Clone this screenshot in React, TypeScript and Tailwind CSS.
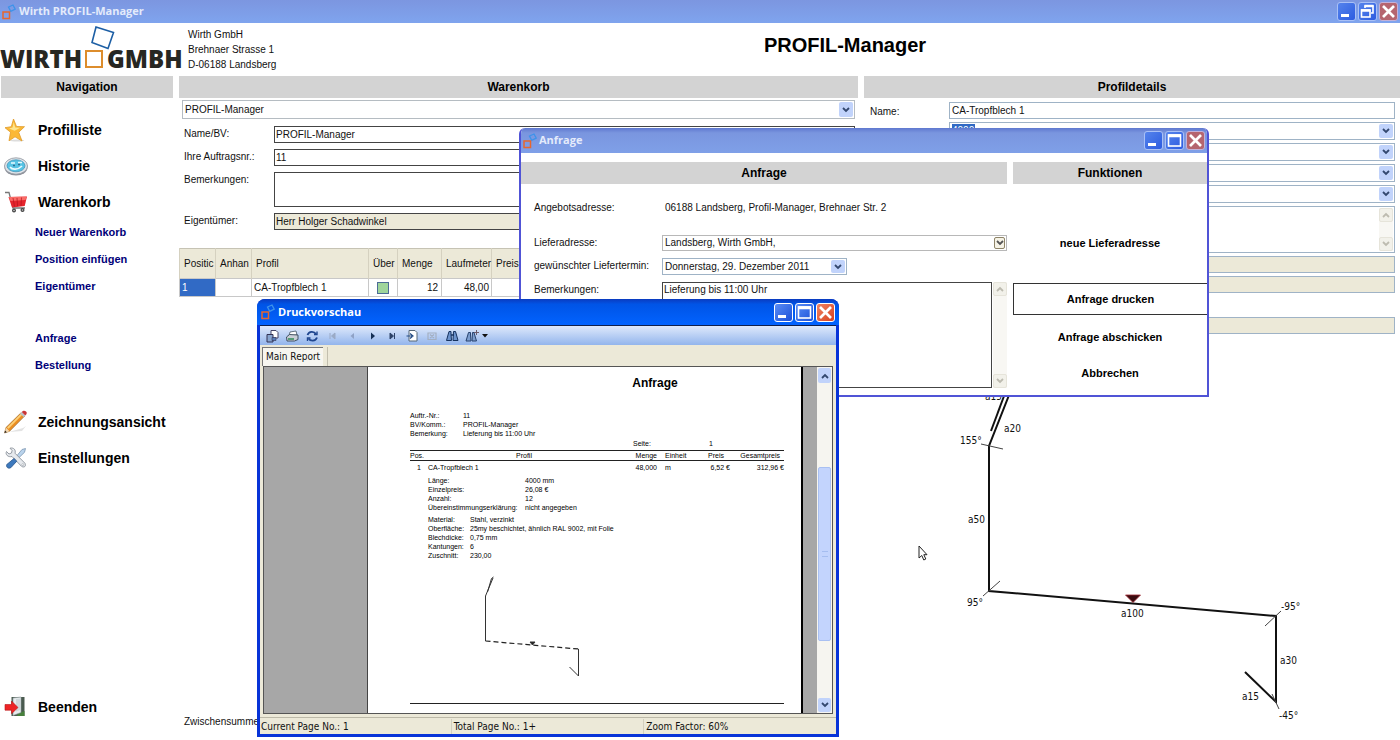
import type { ReactNode } from 'react';
import clsx from 'clsx';

const HEAD_FONT = "font-['Liberation_Sans',Arial,sans-serif]";
const TAHOMA = "font-['DejaVu_Sans_Condensed','DejaVu_Sans',sans-serif]";

function AppIcon() {
  return (
    <svg viewBox="0 0 14 16" className="h-4 w-3.5 shrink-0" fill="none" aria-hidden="true">
      <path d="m6.500 3 4.500-2 2.200 4.200-4.500 2.200z" stroke="#3d93ea" strokeWidth="1.300" />
      <rect x="1" y="8" width="6.500" height="6.500" stroke="#e8662c" strokeWidth="1.500" />
    </svg>
  );
}

function WindowButtons({ active = false, restore = false }: { active?: boolean; restore?: boolean }) {
  const base = 'flex size-[19px] items-center justify-center rounded-[3px] border';
  const blue = active
    ? 'border-white bg-linear-to-br from-[#5a8cf5] to-[#1c4fd8]'
    : 'border-[#a9c0f6] bg-linear-to-br from-[#5583ec] to-[#2d5be0]';
  const red = active
    ? 'border-white bg-linear-to-br from-[#ee8262] to-[#d8401a]'
    : 'border-[#c3b1d8] bg-[#b5656f]';

  return (
    <div className="ml-auto flex gap-0.5">
      <button type="button" aria-label="Minimieren" className={clsx(base, blue)}>
        <svg viewBox="0 0 17 17" className="size-[17px]">
          <path d="M3 12.500h8" stroke="#fff" strokeWidth="3" />
        </svg>
      </button>
      <button type="button" aria-label="Maximieren" className={clsx(base, blue)}>
        <svg viewBox="0 0 17 17" className="size-[17px]" fill="none" stroke="#fff">
          {restore ? (
            <>
              <path d="M6 5V3h8v7h-2" strokeWidth="1.600" />
              <path d="M5.500 3h9" strokeWidth="2.500" />
              <rect x="2.500" y="7" width="8.500" height="7" strokeWidth="1.600" />
              <path d="M2 7.500h9.500" strokeWidth="2.500" />
            </>
          ) : (
            <>
              <rect x="2.500" y="3" width="12" height="11" strokeWidth="1.600" />
              <path d="M2 3.800h13" strokeWidth="3" />
            </>
          )}
        </svg>
      </button>
      <button type="button" aria-label="Schließen" className={clsx(base, red)}>
        <svg viewBox="0 0 17 17" className="size-[17px]">
          <path d="m3 3 11 11M14 3 3 14" stroke="#fff" strokeWidth="2.700" />
        </svg>
      </button>
    </div>
  );
}

function Chevron({ up = false, color = '#33486f' }: { up?: boolean; color?: string }) {
  return (
    <svg viewBox="0 0 8 6" className="h-1.5 w-2" fill="none" stroke={color} strokeWidth="1.8">
      <path d={up ? 'm1 5 3-3 3 3' : 'm1 1 3 3 3-3'} />
    </svg>
  );
}

function SectionBar({ children }: { children: ReactNode }) {
  return (
    <h2 className="flex h-[22px] items-center justify-center bg-[#d3d3d3] text-xs font-bold text-black">
      {children}
    </h2>
  );
}

type ComboProps = {
  id: string;
  value: string;
  label?: string;
  selected?: boolean;
  plain?: boolean;
  className?: string;
};

function Combo({ id, value, label, selected, plain, className }: ComboProps) {
  return (
    <div className={clsx('flex items-center border bg-white p-px', className)}>
      <select
        id={id}
        aria-label={label}
        defaultValue={value}
        className={clsx(
          'h-full min-w-0 appearance-none leading-3',
          selected ? 'ml-px w-[23px] bg-[#316ac5] text-white' : 'w-full bg-white pl-px'
        )}
      >
        <option value={value}>{value}</option>
      </select>
      <span
        className={clsx(
          'pointer-events-none ml-auto flex h-full shrink-0 items-center justify-center rounded-[2px]',
          plain ? 'w-[11px] border border-[#8e8468] bg-[#f6f3e6]' : 'w-3.5 bg-[#c1d3fb]'
        )}
      >
        <Chevron color={plain ? '#555' : '#33486f'} />
      </span>
    </div>
  );
}

function GhostScroll() {
  return (
    <div className="flex w-3.5 shrink-0 flex-col justify-between bg-[#f8f7f3]">
      <span className="flex h-3.5 items-center justify-center rounded-[2px] border border-[#e6e4da] bg-[#f2f1ea]">
        <Chevron up color="#bdbbb0" />
      </span>
      <span className="flex h-3.5 items-center justify-center rounded-[2px] border border-[#e6e4da] bg-[#f2f1ea]">
        <Chevron color="#bdbbb0" />
      </span>
    </div>
  );
}

const icons = {
  star: (
    <>
      <ellipse cx="13" cy="22.500" rx="7" ry="1" fill="#ddd" />
      <path d="m9.500 1 3 7.500 8 .2-5.800 5.600 3.300 8.700-7-4.200-6 4 1.500-8.600L1 9.700l6.300-1z" fill="#fbb836" stroke="#e09a28" strokeWidth=".8" />
      <path d="m9.700 4 1.500 5.500 5 .3-5.500 3L5 10.400l3.600-.8z" fill="#fde58e" />
    </>
  ),
  disc: (
    <>
      <ellipse cx="12" cy="13.500" rx="11.500" ry="8" fill="#8f929b" />
      <ellipse cx="12" cy="12" rx="11.500" ry="8.200" fill="#dfe3e8" stroke="#8f959e" strokeWidth=".8" />
      <ellipse cx="12" cy="11.800" rx="9" ry="6" fill="#57c3e4" stroke="#3b8fb5" strokeWidth=".7" />
      <path d="M6 13c2 3 8 3 12-1M7 9h4M14 8.500h4" stroke="#e6fafe" strokeWidth="1.600" fill="none" />
      <path d="M9 11.500h2M14 10.500h2" stroke="#2d6d90" strokeWidth="1.300" />
    </>
  ),
  cart: (
    <>
      <path d="M1 2.500h4l4 15.500h12" stroke="#777" strokeWidth="1.300" fill="none" />
      <path d="m4.500 7 18.500-.5-2.300 9.500L8 17.500z" fill="#e5242c" />
      <path d="m5 7 17.500-.3-1 3.300L6.500 11z" fill="#fa6b66" />
      <path d="m9 8 1.500 8.500M13 8l.6 8.300M17.500 7.500 17 16" stroke="#b3141c" strokeWidth=".7" />
      <circle cx="10" cy="20.500" r="2" fill="#444" />
      <circle cx="18.500" cy="20" r="2" fill="#444" />
      <circle cx="10" cy="20.500" r=".8" fill="#ccc" />
      <circle cx="18.500" cy="20" r=".8" fill="#ccc" />
    </>
  ),
  pencil: (
    <>
      <path d="M5 22 19 18l3-2-4 5z" fill="#e3e3e3" />
      <path d="m.5 23 1.500-5.500L17 2.800l3.600 3.300L5.500 21.300z" fill="#ec8f22" stroke="#8b5a20" strokeWidth=".6" />
      <path d="m3 17.500 14-14 1.300 1.200L4.500 18.800z" fill="#fcd077" />
      <path d="m.5 23 1.500-5.500 3.500 3.800z" fill="#f2d6ae" />
      <path d="m.5 23 .6-2.400 1.700 1.600z" fill="#222" />
      <path d="m16 3.800 1.700-1.700 3.600 3.300-1.700 1.700z" fill="#b9c3c9" />
      <path d="M17.700 2.100c1.600-2 3.200-1.600 4.300-.6s1.200 2.400-.7 3.900z" fill="#c93537" />
    </>
  ),
  tools: (
    <>
      <path d="m18 3.500 3.500-1-1 3.800L12 14.500 10.200 13z" fill="#b9d3ec" stroke="#7b95b1" strokeWidth=".8" />
      <path d="M2.500 5.500 5 8l2.500-1 .6-2.500L6 2.200c4-1 6 2 5 5L21 17.300c1.500 3-1 4.700-3.500 3L8 10.500c-4 1-7-2-5.500-5z" fill="#e6e9ed" stroke="#8b929b" strokeWidth=".9" />
      <path d="m10 12.500 2.800 2.700-6 6.500c-3 1.500-5-1-4-3.200z" fill="#3d79bd" stroke="#2a568c" strokeWidth=".8" />
      <circle cx="18.800" cy="18.600" r="1" fill="#fff" stroke="#8b929b" strokeWidth=".5" />
    </>
  ),
  exit: (
    <>
      <rect x="7.500" y="2" width="13" height="19" fill="#4a5a4f" />
      <path d="M14 18.500 20.500 16v5H13z" fill="#47803c" />
      <path d="m9 3 8-1v15.500L9 20.500z" fill="#e7ecee" stroke="#8c9799" strokeWidth=".6" />
      <path d="m12 4 4-.5V15l-4 1.500z" fill="#cfd7da" />
      <path d="M1 9.500h6.500V6l6.500 6.500-6.500 6.300v-3.600H1z" fill="#ee2426" stroke="#b51518" strokeWidth=".6" />
    </>
  ),
};

function NavItem({ icon, children }: { icon: keyof typeof icons; children: ReactNode }) {
  return (
    <button type="button" className="flex h-9 items-center gap-2.5 pl-1 text-left text-sm font-bold text-black">
      <svg viewBox="0 0 24 24" className="size-6 shrink-0" aria-hidden="true">{icons[icon]}</svg>
      {children}
    </button>
  );
}

function SubItem({ children }: { children: ReactNode }) {
  return (
    <button type="button" className="h-[26px] pl-[35px] text-left text-[11px] font-bold text-[#000078]">
      {children}
    </button>
  );
}

function Navigation() {
  return (
    <nav className="flex flex-col">
      <SectionBar>Navigation</SectionBar>
      <div className="-ml-px flex flex-1 flex-col pt-3.5 pb-[15px]">
        <NavItem icon="star">Profilliste</NavItem>
        <NavItem icon="disc">Historie</NavItem>
        <NavItem icon="cart">Warenkorb</NavItem>
        <div className="-mt-px flex flex-col gap-px">
          <SubItem>Neuer Warenkorb</SubItem>
          <SubItem>Position einfügen</SubItem>
          <SubItem>Eigentümer</SubItem>
        </div>
        <div className="my-[26px] flex flex-col gap-px">
          <SubItem>Anfrage</SubItem>
          <SubItem>Bestellung</SubItem>
        </div>
        <NavItem icon="pencil">Zeichnungsansicht</NavItem>
        <NavItem icon="tools">Einstellungen</NavItem>
        <div className="mt-auto flex flex-col">
          <NavItem icon="exit">Beenden</NavItem>
        </div>
      </div>
    </nav>
  );
}

const cartColumns = [
  { title: 'Positic', width: 'w-9' },
  { title: 'Anhan', width: 'w-9' },
  { title: 'Profil', width: 'w-[117px]' },
  { title: 'Über', width: 'w-[29px]' },
  { title: 'Menge', width: 'w-11' },
  { title: 'Laufmeter', width: 'w-[50px]' },
  { title: 'Preis', width: '' },
];

function Warenkorb() {
  const field = 'h-[17px] w-full border border-[#444] px-px';
  return (
    <section className="flex min-w-0 flex-col">
      <SectionBar>Warenkorb</SectionBar>
      <div className="px-[3px] pt-0.5">
        <Combo id="cart" label="Warenkorb" value="PROFIL-Manager" className="h-[19px] border-[#b5bcc2]" />
      </div>
      <div className="mt-[7px] grid grid-cols-[90px_minmax(0,1fr)] gap-y-1.5 pr-[3px] pl-[5px]">
        <label htmlFor="bv" className="leading-4">Name/BV:</label>
        <input id="bv" defaultValue="PROFIL-Manager" className={field} />
        <label htmlFor="auftrag" className="leading-4">Ihre Auftragsnr.:</label>
        <input id="auftrag" defaultValue="11" className={field} />
        <label htmlFor="bem" className="leading-4">Bemerkungen:</label>
        <textarea id="bem" className="h-[35px] w-full resize-none border border-[#444]" />
        <label htmlFor="owner" className="leading-4">Eigentümer:</label>
        <input id="owner" readOnly defaultValue="Herr Holger Schadwinkel" className={clsx(field, 'bg-[#ece9d8]')} />
      </div>
      <table className="mt-[18px] w-full table-fixed border-collapse border border-[#c6c3b4]">
        <thead>
          <tr className="h-[30px] bg-[#ece9d8]">
            {cartColumns.map((c) => (
              <th
                key={c.title}
                className={clsx(c.width, 'border-x border-x-[#d5d1c0] pl-1 text-left font-normal whitespace-nowrap')}
              >
                {c.title}
              </th>
            ))}
          </tr>
        </thead>
        <tbody>
          <tr className="h-[18px] *:border *:border-[#c8c8c8]">
            <td className="bg-[#316ac5] pl-0.5 text-white">1</td>
            <td />
            <td className="pl-0.5 whitespace-nowrap">CA-Tropfblech 1</td>
            <td>
              <input
                type="checkbox"
                aria-label="Übereinstimmungserklärung"
                className="mx-auto block size-3 appearance-none border border-[#4c6c96] bg-[#9fd59b] p-px"
              />
            </td>
            <td className="pr-[3px] text-right">12</td>
            <td className="pr-0.5 text-right">48,00</td>
            <td />
          </tr>
        </tbody>
      </table>
      <div className="mt-auto pb-2.5 pl-[5px] leading-4">Zwischensumme:</div>
    </section>
  );
}

function ProfileDrawing() {
  return (
    <svg viewBox="864 380 536 350" className="mt-[46px] h-[350px] w-full" fill="none" stroke="#111">
      <g strokeWidth="2">
        <path d="m1015 380-26 66v145l287 25v86l-31-30" />
        <path d="m1010 380-19 51" />
      </g>
      <g strokeWidth="1" stroke="#444">
        <path d="m981 444 22 5M983 596l17-15M1281 611l-16 15M1272 694l7 15" />
      </g>
      <path d="M1125.500 595h15l-7.500 7.500z" fill="#3a0c10" stroke="#a02a32" strokeWidth=".8" />
      <g className={clsx(TAHOMA, 'text-[10px]')} fill="#111" stroke="none">
        <text x="985" y="400">a15</text>
        <text x="1004" y="432">a20</text>
        <text x="960" y="444">155°</text>
        <text x="968" y="523">a50</text>
        <text x="967" y="606">95°</text>
        <text x="1121" y="617">a100</text>
        <text x="1281" y="610">-95°</text>
        <text x="1280" y="664">a30</text>
        <text x="1242" y="700">a15</text>
        <text x="1279" y="719">-45°</text>
      </g>
    </svg>
  );
}

function Profildetails() {
  const border = 'border-[#9fb3c6]';
  const readOnly = clsx('h-[17px] w-full border bg-[#ece9d8]', border);
  return (
    <section className="flex min-w-0 flex-col">
      <SectionBar>Profildetails</SectionBar>
      <div className="grid grid-cols-[79px_minmax(0,1fr)] pt-1 pr-[5px] pl-1.5">
        <label htmlFor="pname" className="pt-0.5 leading-4">Name:</label>
        <div className="flex flex-col gap-[3px]">
          <input id="pname" defaultValue="CA-Tropfblech 1" className={clsx('h-[17px] w-full border px-0.5', border)} />
          <Combo id="len" label="Länge" value="4000" selected className={clsx('h-[18px]', border)} />
          <Combo id="mat" label="Material" value="" className={clsx('h-[18px]', border)} />
          <Combo id="surface" label="Oberfläche" value="" className={clsx('h-[18px]', border)} />
          <Combo id="thick" label="Blechdicke" value="" className={clsx('h-[18px]', border)} />
          <div className={clsx('flex h-[47px] border p-px', border)}>
            <textarea aria-label="Bemerkung" className="min-w-0 flex-1 resize-none" />
            <GhostScroll />
          </div>
          <input aria-label="Kantungen" readOnly className={readOnly} />
          <input aria-label="Zuschnitt" readOnly className={readOnly} />
          <input aria-label="Gesamtpreis" readOnly className={clsx(readOnly, 'mt-[21px]')} />
        </div>
      </div>
      <ProfileDrawing />
    </section>
  );
}

function AnfrageWindow() {
  const action = 'flex w-full items-center justify-center text-[11px] font-bold text-black';
  return (
    <div className="absolute top-[128px] left-[519px] w-[690px] overflow-hidden rounded-t-md border-2 border-t-0 border-[#5054d6] bg-white">
      <div className="-mx-0.5 flex h-[25px] items-center bg-linear-to-b from-[#5f78cf] via-[#7a96df] via-20% to-[#7fa0e8] pr-1 pl-1">
        <AppIcon />
        <span className="pl-0.5 font-['Open_Sans',sans-serif] text-[11px] font-bold text-[#e4ebfb]">Anfrage</span>
        <WindowButtons />
      </div>
      <div className="flex gap-1.5 pt-[9px] pb-1">
        <div className="min-w-0 flex-1">
          <SectionBar>Anfrage</SectionBar>
          <div className="grid grid-cols-[128px_minmax(0,1fr)] pt-4 pl-[13px]">
            <span className="h-[35px] leading-4">Angebotsadresse:</span>
            <span className="pl-[3px] leading-4">06188 Landsberg, Profil-Manager, Brehnaer Str. 2</span>
            <label htmlFor="delivery" className="h-[23px] leading-4">Lieferadresse:</label>
            <Combo id="delivery" value="Landsberg, Wirth GmbH," plain className="h-4 border-[#b8b8b8]" />
            <label htmlFor="date" className="h-6 leading-4 whitespace-nowrap">gewünschter Liefertermin:</label>
            <Combo id="date" value="Donnerstag, 29. Dezember 2011" className="h-[17px] w-[185px] border-[#9fb3c6]" />
            <label htmlFor="note" className="leading-4">Bemerkungen:</label>
            <div className="flex h-[106px] gap-px">
              <textarea
                id="note"
                defaultValue="Lieferung bis 11:00 Uhr"
                className="min-w-0 flex-1 resize-none border border-[#444] px-px leading-[14px]"
              />
              <GhostScroll />
            </div>
          </div>
        </div>
        <div className="w-[194px]">
          <SectionBar>Funktionen</SectionBar>
          <div className="flex flex-col pt-[41px]">
            <button type="button" className={clsx(action, 'h-9')}>neue Lieferadresse</button>
            <button type="button" className={clsx(action, 'mt-[22px] mb-1 h-8 border border-r-0 border-[#333]')}>Anfrage drucken</button>
            <button type="button" className={clsx(action, 'h-9')}>Anfrage abschicken</button>
            <button type="button" className={clsx(action, 'h-9')}>Abbrechen</button>
          </div>
        </div>
      </div>
    </div>
  );
}

const toolbar: { label: string; art: ReactNode }[] = [
  {
    label: 'Exportieren',
    art: (
      <>
        <path d="M6 1.500h5l2 2V9H6z" fill="#fff" stroke="#446" />
        <path d="M2 5.500h6V13H2z" fill="#88a5cf" stroke="#335" />
        <path d="M7 8.500h4v3H7z" fill="#557bb5" stroke="#335" strokeWidth=".6" />
      </>
    ),
  },
  {
    label: 'Drucken',
    art: (
      <>
        <path d="m5 3 6-1 1 4-8 1z" fill="#fff" stroke="#456" strokeWidth=".8" />
        <path d="m1.500 8 3-2.500L13 6v4.500L9.500 12H2z" fill="#c9ced6" stroke="#345" strokeWidth=".9" />
        <path d="M3 10h6" stroke="#2d8a56" strokeWidth="1.300" />
      </>
    ),
  },
  {
    label: 'Aktualisieren',
    art: (
      <g fill="none" stroke="#1f468f" strokeWidth="1.800">
        <path d="M2.500 6C4 2 9 2 11 5M12 8.500c-1.500 4-6.500 4-8.500 1" />
        <path d="M12 2.500v3H9M2.500 12V9h3" strokeWidth="1.400" />
      </g>
    ),
  },
  { label: 'Erste Seite', art: <path d="M5 4v6M10 4v6L6.500 7z" fill="#9aaac6" stroke="#9aaac6" /> },
  { label: 'Vorherige Seite', art: <path d="M9 4v6L5.500 7z" fill="#8fa2c6" /> },
  { label: 'Nächste Seite', art: <path d="M6 3.500v7L10 7z" fill="#152f55" /> },
  { label: 'Letzte Seite', art: <path d="M9.500 4v6M5 4v6l3.500-3z" fill="#2d4268" stroke="#2d4268" /> },
  {
    label: 'Gehe zu Seite',
    art: (
      <>
        <path d="M4 1.500h6l2 2V12H4z" fill="#fff" stroke="#567" />
        <path d="M1.500 7H7M5 4.500 8 7l-3 2.500" fill="none" stroke="#234b84" strokeWidth="1.200" />
      </>
    ),
  },
  {
    label: 'Abbrechen',
    art: <path d="M3 4h8v6.500H3zM5 5.500l4 3.500M9 5.500 5 9" fill="none" stroke="#a3afc2" strokeWidth="1.200" />,
  },
  {
    label: 'Suchen',
    art: (
      <>
        <path d="M4 2.500h2v3l.5 6H1.500L3 6zM8.500 2.500h2L11.500 6 13 11.500H8z" fill="#6c93cc" stroke="#16325f" />
        <path d="M6 6h3" stroke="#16325f" strokeWidth="1.600" />
      </>
    ),
  },
  {
    label: 'Zoom',
    art: (
      <>
        <path d="M3.500 3.500h2v2.500l.5 6H1L2.500 7zM7.500 3.500h1.500L10 7l1.500 5H7z" fill="#7c9dce" stroke="#28436f" />
        <path d="M11.500 1v5M9 3.500h5" stroke="#6b5c6d" />
      </>
    ),
  },
];

function ReportPage() {
  const details = [
    ['Länge:', '4000 mm'],
    ['Einzelpreis:', '26,08 €'],
    ['Anzahl:', '12'],
    ['Übereinstimmungserklärung:', 'nicht angegeben'],
  ];
  const material = [
    ['Material:', 'Stahl, verzinkt'],
    ['Oberfläche:', '25my beschichtet, ähnlich RAL 9002, mit Folie'],
    ['Blechdicke:', '0,75 mm'],
    ['Kantungen:', '6'],
    ['Zuschnitt:', '230,00'],
  ];
  return (
    <div className="min-w-0 flex-1 border-r-2 border-l border-l-[#444] border-r-black bg-white pr-[17px] pl-[42px] text-[7px] leading-[9px] text-black">
      <h3 className="pt-2 pl-[116px] text-center text-xs leading-4 font-bold">Anfrage</h3>
      <dl className="mt-5 grid grid-cols-[53px_1fr]">
        <dt>Auftr.-Nr.:</dt>
        <dd>11</dd>
        <dt>BV/Komm.:</dt>
        <dd>PROFIL-Manager</dd>
        <dt>Bemerkung:</dt>
        <dd>Lieferung bis 11:00 Uhr</dd>
      </dl>
      <div className="flex pt-px pb-0.5 pl-[223px]">
        <span className="w-[76px]">Seite:</span>
        <span>1</span>
      </div>
      <table className="w-full table-fixed border-collapse">
        <thead>
          <tr className="border-y border-[#222] *:font-normal">
            <th className="w-[18px] text-left">Pos.</th>
            <th>Profil</th>
            <th className="w-[37px] text-right">Menge</th>
            <th className="w-[42px] pl-2 text-left">Einheit</th>
            <th className="w-[31px] pr-1.5 text-right">Preis</th>
            <th className="w-[54px] pr-1 text-right">Gesamtpreis</th>
          </tr>
        </thead>
        <tbody>
          <tr className="*:pt-0.5">
            <td className="text-center">1</td>
            <td>CA-Tropfblech 1</td>
            <td className="text-right">48,000</td>
            <td className="pl-2">m</td>
            <td className="text-right">6,52 €</td>
            <td className="text-right">312,96 €</td>
          </tr>
        </tbody>
      </table>
      <dl className="mt-1 grid grid-cols-[97px_1fr] pl-[18px]">
        {details.map(([k, v]) => (
          <div key={k} className="contents">
            <dt className="whitespace-nowrap">{k}</dt>
            <dd>{v}</dd>
          </div>
        ))}
      </dl>
      <dl className="mt-[3px] grid grid-cols-[42px_1fr] pl-[18px]">
        {material.map(([k, v]) => (
          <div key={k} className="contents">
            <dt>{k}</dt>
            <dd>{v}</dd>
          </div>
        ))}
      </dl>
      <svg viewBox="0 0 100 108" className="mt-3.5 ml-[73px] h-[108px] w-[100px]" fill="none" stroke="#333">
        <path d="M10 4 2.500 22v45M4.500 18l4-13.500L10.500 3" />
        <path d="m2.500 67 93 8" strokeDasharray="5 3" stroke="#222" strokeWidth="1.200" />
        <path d="M95.500 75v27l-9-9" />
        <path d="M47 68h5l-2.500 3z" fill="#222" />
      </svg>
      <hr className="mt-[21px] border-[#222]" />
    </div>
  );
}

function DruckvorschauWindow() {
  return (
    <div className="absolute top-[299px] left-[257px] flex h-[438px] w-[582px] flex-col overflow-hidden rounded-t-lg bg-[#0733d8]">
      <div className="flex h-[26px] shrink-0 items-center bg-linear-to-b from-[#0a3bbf] via-[#0054e6] via-20% to-[#0263ff] pr-1 pl-1">
        <AppIcon />
        <span className="pl-[3px] font-['Open_Sans',sans-serif] text-[11px] font-bold text-white">Druckvorschau</span>
        <WindowButtons active />
      </div>
      <div className="mx-[3px] mb-[3px] flex min-h-0 flex-1 flex-col bg-[#ece9d8]">
        <div className="flex h-5 shrink-0 items-center border-t border-[#10204c] bg-linear-to-b from-[#dfe9fb] to-[#93b5ec] pl-0.5">
          {toolbar.map((t) => (
            <button key={t.label} type="button" title={t.label} className="flex w-5 justify-center">
              <svg viewBox="0 0 14 14" className="size-3.5">{t.art}</svg>
            </button>
          ))}
          <svg viewBox="0 0 6 4" className="h-1 w-1.5"><path d="M0 0h6L3 3.500z" fill="#111" /></svg>
        </div>
        <div className="flex h-[21px] shrink-0 items-stretch pt-0.5">
          <button type="button" className={clsx(TAHOMA, 'ml-0.5 border-t border-l border-[#777] bg-[#f7f6f0] px-[3px] pb-0.5 text-[10px]')}>
            Main Report
          </button>
          <span className="ml-1 border-l border-[#c2bfae]" />
        </div>
        <div className="mx-[3px] flex min-h-0 flex-1 border border-[#555] bg-[#a7a7a7]">
          <div className="w-[103px] shrink-0" />
          <ReportPage />
          <div className="w-3.5 shrink-0" />
          <div className="flex w-[15px] shrink-0 flex-col bg-[#f6f5f0] p-px">
            <button type="button" aria-label="Nach oben" className="flex h-[15px] items-center justify-center rounded-[2px] bg-[#c1d3fb]">
              <Chevron up />
            </button>
            <div className="mt-[84px] flex h-[174px] items-center justify-center rounded-[2px] border border-[#a9c0f2] bg-[#c3d4fd]">
              <span className="h-1.5 w-1.5 border-y border-[#a5bdf0]" />
            </div>
            <button type="button" aria-label="Nach unten" className="mt-auto flex h-3.5 items-center justify-center rounded-[2px] bg-[#c1d3fb]">
              <Chevron />
            </button>
          </div>
        </div>
        <div className={clsx(TAHOMA, 'mt-[3px] flex h-[17px] shrink-0 items-center border-t border-[#bcb9a8] pl-px text-[10px]')}>
          <span className="flex-1">Current Page No.: 1</span>
          <span className="flex-1 border-l border-[#d2cfbe] pl-0.5">Total Page No.: 1+</span>
          <span className="flex-1 border-l border-[#d2cfbe] pl-0.5">Zoom Factor: 60%</span>
        </div>
      </div>
    </div>
  );
}

function Logo() {
  return (
    <svg viewBox="0 0 186 53" className="h-[53px] w-[186px] shrink-0" role="img">
      <g className="font-['Open_Sans',sans-serif] text-[24px] font-extrabold" fill="#272722">
        <text x="0" y="45">WIRTH</text>
        <text x="107" y="45">GMBH</text>
      </g>
      <path d="m96 4 17.500 5.500-5.500 16L92 19.500z" fill="none" stroke="#1d5fa5" strokeWidth="1.600" />
      <rect x="86" y="28" width="16" height="16" fill="none" stroke="#dd8d2c" strokeWidth="2" />
    </svg>
  );
}

export default function App() {
  return (
    <div className={clsx(HEAD_FONT, 'relative flex min-h-screen flex-col overflow-hidden bg-white text-[10px] text-[#111]')}>
      <div className="flex h-[23px] items-center bg-linear-to-b from-[#7c96e0] to-[#7fa4ee] pr-0.5 pl-0.5">
        <AppIcon />
        <span className="pl-[3px] font-['Open_Sans',sans-serif] text-[11px] font-bold text-[#e4ebfb]">Wirth PROFIL-Manager</span>
        <WindowButtons restore />
      </div>

      <header className="flex h-[53px] items-center">
        <Logo />
        <address className="w-[104px] pl-0.5 leading-[15px] whitespace-nowrap not-italic">
          Wirth GmbH
          <br />
          Brehnaer Strasse 1
          <br />
          D-06188 Landsberg
        </address>
        <h1 className="flex-1 pb-2.5 text-center text-xl font-bold text-black">PROFIL-Manager</h1>
      </header>

      <main className="grid flex-1 grid-cols-[172px_minmax(0,679fr)_minmax(0,536fr)] gap-1.5 pl-px">
        <Navigation />
        <Warenkorb />
        <Profildetails />
      </main>

      <svg viewBox="0 0 10 16" className="absolute top-[545px] left-[918px] h-4 w-2.5" fill="#fff" stroke="#222">
        <path d="M1 1v12l2.800-2.500 2 4.500 2-1-2-4.300H9z" />
      </svg>

      <AnfrageWindow />
      <DruckvorschauWindow />
    </div>
  );
}
